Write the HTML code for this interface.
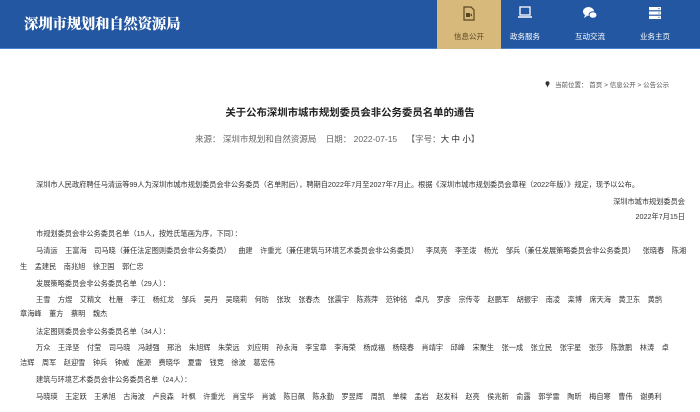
<!DOCTYPE html>
<html><head><meta charset="utf-8">
<style>
*{margin:0;padding:0;box-sizing:border-box}
body{width:700px;height:412px;overflow:hidden;background:#fff;font-family:"Liberation Sans","Noto Sans CJK SC",sans-serif;color:#333;position:relative}
.hd{position:absolute;left:0;top:0;width:700px;height:49px;background:#2357a2;border-bottom:1.5px solid #4a7fcc}
.logo{position:absolute;left:24px;top:13px;font-family:"Noto Serif CJK SC",serif;font-weight:900;font-size:14.5px;color:#fff;letter-spacing:-0.3px}
.nav{position:absolute;top:0;height:49px;width:64px;text-align:center;color:#fff;font-size:7.5px}
.nav svg{position:absolute;left:50%;top:6px;transform:translateX(-50%)}
.nav span{position:absolute;left:0;right:0;top:31px}
.on{background:#d6b97b;color:#5a4520}
.bc{position:absolute;left:545px;top:79px;font-size:6.5px;color:#555;white-space:nowrap}
.t{position:absolute;left:0;width:700px;top:104px;text-align:center;font-size:10.4px;font-weight:bold;color:#222}
.src{position:absolute;left:195px;top:133px;font-size:8.5px;color:#666;white-space:nowrap}
.src b{color:#222;font-weight:normal}
.l{position:absolute;font-size:7.2px;line-height:8px;color:#333;white-space:nowrap}
.n span{margin-right:7.5px}
</style></head><body>
<div class="hd">
<div class="logo">深圳市规划和自然资源局</div>
<div class="nav on" style="left:437px"><svg width="12" height="15" viewBox="0 0 12 15"><path d="M1 1h7l3 3v10H1z" fill="none" stroke="#5a4520" stroke-width="1.2"/><rect x="3" y="7" width="4" height="4" fill="#5a4520"/><path d="M7 9l2-1.5v3z" fill="#5a4520"/></svg><span>信息公开</span></div>
<div class="nav" style="left:493px"><svg width="16" height="13" viewBox="0 0 16 13"><rect x="3" y="1" width="10" height="8" fill="none" stroke="#fff" stroke-width="1.3"/><path d="M1 11h14" stroke="#fff" stroke-width="1.5"/></svg><span>政务服务</span></div>
<div class="nav" style="left:558px"><svg width="16" height="14" viewBox="0 0 16 14"><ellipse cx="6.5" cy="5.5" rx="5.5" ry="4.5" fill="#fff"/><ellipse cx="11" cy="9" rx="4" ry="3.3" fill="#fff" stroke="#2357a2" stroke-width="1"/><path d="M3 9l-1 3 3-2z" fill="#fff"/></svg><span>互动交流</span></div>
<div class="nav" style="left:623px"><svg width="14" height="14" viewBox="0 0 14 14"><rect x="1" y="1" width="12" height="3.2" fill="#fff"/><rect x="1" y="5.4" width="12" height="3.2" fill="#fff"/><rect x="1" y="9.8" width="12" height="3.2" fill="#fff"/><circle cx="11" cy="2.6" r=".6" fill="#2357a2"/><circle cx="11" cy="7" r=".6" fill="#2357a2"/><circle cx="11" cy="11.4" r=".6" fill="#2357a2"/></svg><span>业务主页</span></div>
</div>
<div class="bc"><svg width="5" height="7" viewBox="0 0 5 7" style="vertical-align:-1px;margin-right:5px"><circle cx="2.5" cy="2.3" r="2" fill="#333"/><path d="M1.2 3.5L2.5 6.5 3.8 3.5z" fill="#333"/></svg>当前位置：&nbsp;首页 &gt; 信息公开 &gt; 公告公示</div>
<div class="t">关于公布深圳市城市规划委员会非公务委员名单的通告</div>
<div class="src">来源：&nbsp;深圳市规划和自然资源局&nbsp;&nbsp;&nbsp;&nbsp;日期：&nbsp;2022-07-15&nbsp;&nbsp;&nbsp;&nbsp;【字号：<b>大 中 小</b>】</div>
<div class="l" style="left:36px;top:181px">深圳市人民政府聘任马清运等99人为深圳市城市规划委员会非公务委员（名单附后），聘期自2022年7月至2027年7月止。根据《深圳市城市规划委员会章程（2022年版）》规定，现予以公布。</div>
<div class="l" style="right:15px;top:198px">深圳市城市规划委员会</div>
<div class="l" style="right:15px;top:213px">2022年7月15日</div>
<div class="l" style="left:36px;top:230px">市规划委员会非公务委员名单（15人，按姓氏笔画为序，下同）：</div>
<div class="l n" style="left:36px;top:247px"><span>马清运</span><span>王富海</span><span>司马晓（兼任法定图则委员会非公务委员）</span><span>曲建</span><span>许重光（兼任建筑与环境艺术委员会非公务委员）</span><span>李凤亮</span><span>李圣泼</span><span>杨光</span><span>邹兵（兼任发展策略委员会非公务委员）</span><span>张晓春</span><span>陈湘</span></div>
<div class="l n" style="left:20px;top:263px"><span>生</span><span>孟建民</span><span>南兆旭</span><span>徐卫国</span><span>郭仁忠</span></div>
<div class="l" style="left:36px;top:280px">发展策略委员会非公务委员名单（29人）：</div>
<div class="l n" style="left:36px;top:296px"><span>王雪</span><span>方煜</span><span>艾精文</span><span>杜雁</span><span>李江</span><span>杨红龙</span><span>邹兵</span><span>吴丹</span><span>吴晓莉</span><span>何昉</span><span>张玫</span><span>张春杰</span><span>张震宇</span><span>陈燕萍</span><span>范钟铭</span><span>卓凡</span><span>罗彦</span><span>宗传苓</span><span>赵鹏军</span><span>胡振宇</span><span>南凌</span><span>栾博</span><span>席天海</span><span>黄卫东</span><span>黄鹄</span></div>
<div class="l n" style="left:20px;top:310px"><span>章海峰</span><span>董方</span><span>蔡明</span><span>魏杰</span></div>
<div class="l" style="left:36px;top:328px">法定图则委员会非公务委员名单（34人）：</div>
<div class="l n" style="left:36px;top:344px"><span>万众</span><span>王泽坚</span><span>付莹</span><span>司马晓</span><span>冯越强</span><span>邢治</span><span>朱旭辉</span><span>朱荣远</span><span>刘应明</span><span>孙永海</span><span>李宝章</span><span>李海荣</span><span>杨成福</span><span>杨晓春</span><span>肖靖宇</span><span>邱峰</span><span>宋聚生</span><span>张一成</span><span>张立民</span><span>张宇星</span><span>张莎</span><span>陈敦鹏</span><span>林涛</span><span>卓</span></div>
<div class="l n" style="left:20px;top:359px"><span>洁辉</span><span>周军</span><span>赵迎雪</span><span>钟兵</span><span>钟威</span><span>施源</span><span>费晓华</span><span>夏雷</span><span>钱竞</span><span>徐波</span><span>葛宏伟</span></div>
<div class="l" style="left:36px;top:376px">建筑与环境艺术委员会非公务委员名单（24人）：</div>
<div class="l n" style="left:36px;top:393px"><span>马晓瑛</span><span>王定跃</span><span>王承旭</span><span>古海波</span><span>卢良森</span><span>叶枫</span><span>许重光</span><span>肖宝华</span><span>肖诚</span><span>陈日飙</span><span>陈永勤</span><span>罗昱辉</span><span>周凯</span><span>单樑</span><span>孟岩</span><span>赵发科</span><span>赵亮</span><span>侯兆新</span><span>俞露</span><span>郭学雷</span><span>陶昕</span><span>梅自寒</span><span>曹伟</span><span>谢勇利</span></div>
</body></html>
